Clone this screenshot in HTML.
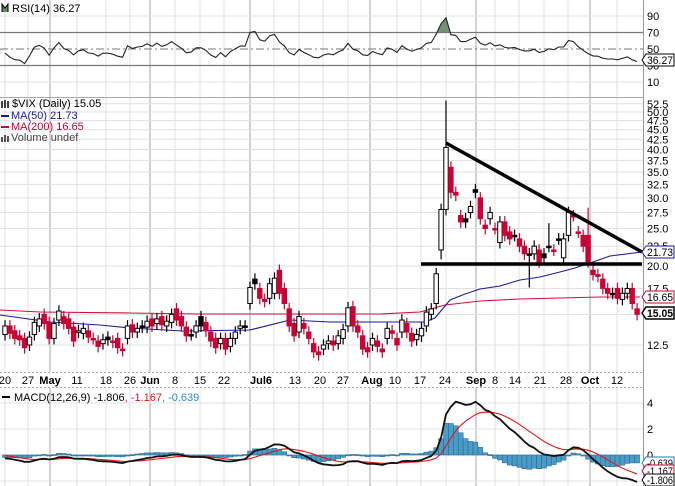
<!DOCTYPE html>
<html><head><meta charset="utf-8"><style>
html,body{margin:0;padding:0;background:#fff;overflow:hidden}
svg{display:block;font-family:"Liberation Sans",sans-serif;font-size:11px}
</style></head><body>
<svg id="c" width="675" height="486" xmlns="http://www.w3.org/2000/svg"></svg>
<script>
var S=document.getElementById('c'),out=[];
function a(s){out.push(s);}
var D=[[13.3,14.0],[14.0,13.4],[13.6,13.0],[13.2,12.9],[13.0,12.3],
[12.5,13.1],[13.3,14.3],[14.0,14.6],[15.0,14.2],[14.3,13.0],
[13.0,14.2],[14.5,15.3],[14.8,14.2],[14.6,13.8],[13.9,12.8],
[13.5,13.6],[13.4,13.8],[13.6,13.1],[13.0,13.0],[12.8,12.4],
[12.6,12.9],[13.1,12.9],[12.8,12.7],[13.0,12.3],[12.2,12.1],
[13.0,14.0],[14.1,13.5],[13.5,13.8],[14.0,13.9],[13.9,14.4],
[14.6,14.0],[14.2,14.6],[14.8,14.1],[14.0,14.4],[14.3,15.0],
[15.5,14.5],[14.8,14.0],[13.9,13.2],[13.3,13.3],[13.5,14.0],
[14.8,14.0],[14.3,13.6],[13.5,12.8],[13.0,12.3],[12.6,13.0],
[13.0,12.2],[12.4,13.0],[13.0,13.5],[13.8,14.0],[14.0,14.0],
[16.0,17.6],[18.5,18.0],[17.5,16.5],[16.4,16.2],[16.5,18.0],
[17.0,18.6],[19.5,17.0],[17.5,16.0],[15.5,14.0],[14.2,13.2],
[13.5,14.8],[14.2,13.8],[13.5,13.0],[12.6,12.0],[12.0,11.8],
[12.2,12.5],[12.6,12.8],[12.8,12.5],[12.6,13.2],[13.0,13.7],
[14.0,15.6],[15.7,14.0],[14.0,13.5],[13.2,12.2],[12.3,12.0],
[12.5,13.0],[12.8,12.4],[12.2,12.0],[13.0,13.8],[13.6,13.4],
[13.0,12.5],[13.5,14.5],[14.2,13.5],[13.4,12.8],[12.9,13.3],
[13.2,13.8],[14.0,15.2],[15.0,15.5],[16.0,19.1],[22.0,28.0],
[28.0,40.5],[36.0,31.0],[31.0,30.5],[27.0,26.0],[26.5,26.0],
[27.5,28.5],[31.5,31.0],[30.0,26.5],[25.5,25.0],[26.5,27.5],
[25.0,25.0],[23.0,26.0],[26.0,24.0],[24.5,23.5],[24.0,24.0],
[23.5,22.5],[22.5,21.5],[21.5,21.5],[21.5,22.5],[22.0,20.5],
[21.5,21.0],[22.5,22.5],[22.0,22.0],[23.5,23.5],[21.0,23.5],
[24.0,27.5],[27.0,27.0],[24.5,24.5],[24.0,22.5],[24.0,20.5],
[19.5,19.0],[19.0,18.8],[18.5,17.5],[17.5,17.0],[17.0,17.0],
[17.5,16.5],[16.4,17.0],[17.0,17.5],[17.5,16.0],[15.5,15.0]];
function X(i){return 5+i*4.9;}
function Y(p){return 266-(Math.log10(p)-Math.log10(20))*387;}
function RY(r){return 49-(r-50)*0.825;}
function MY(v){return 455-v*13;}
var W=643;
var wk=[5,28,50,77,106,130,150,175,200,224,250,274,299,323,348,370,397,421,446,476,495,519,544,568,590,617];
var mon={50:1,150:1,250:1,370:1,476:1,590:1};
function vgrid(y1,y2){wk.forEach(function(x){a('<line x1="'+x+'" y1="'+y1+'" x2="'+x+'" y2="'+y2+'" stroke="'+(mon[x]?'#c4c4c4':'#e0e0e0')+'" stroke-width="'+(mon[x]?1.5:1)+'"/>');});}
vgrid(0,97);
[10,90].forEach(function(r){a('<line x1="0" x2="'+W+'" y1="'+RY(r)+'" y2="'+RY(r)+'" stroke="#e0e0e0"/>');});
var pl=[52.5,50,47.5,45,42.5,40,37.5,35,32.5,30,27.5,25,22.5,20,17.5,15,12.5,10];
vgrid(98,372);
pl.forEach(function(p){a('<line x1="0" x2="'+W+'" y1="'+Y(p)+'" y2="'+Y(p)+'" stroke="#e0e0e0"/>');});
vgrid(388,486);
[4,2,0,-2].forEach(function(v){a('<line x1="0" x2="'+W+'" y1="'+MY(v)+'" y2="'+MY(v)+'" stroke="#e0e0e0"/>');});
var C=D.map(function(d){return d[1];});
var ag=0.18,al=0.22,rsi=[];
for(var i=0;i<C.length;i++){var ch=i?C[i]-C[i-1]:0;ag=(ag*13+Math.max(ch,0))/14;al=(al*13+Math.max(-ch,0))/14;rsi.push(100-100/(1+ag/al));}
var rp=rsi.map(function(r,i){return X(i).toFixed(1)+','+RY(r).toFixed(1);}).join(' ');
a('<defs><clipPath id="ab"><rect x="0" y="0" width="'+W+'" height="'+RY(70)+'"/></clipPath></defs>');
a('<polygon clip-path="url(#ab)" points="'+X(0)+','+RY(70)+' '+rp+' '+X(129)+','+RY(70)+'" fill="#6f9470"/>');
a('<line x1="0" x2="'+W+'" y1="'+RY(70)+'" y2="'+RY(70)+'" stroke="#777" stroke-width="1.2"/>');
a('<line x1="0" x2="'+W+'" y1="'+RY(30)+'" y2="'+RY(30)+'" stroke="#777" stroke-width="1.2"/>');
a('<line x1="0" x2="'+W+'" y1="'+RY(50)+'" y2="'+RY(50)+'" stroke="#777" stroke-dasharray="8,3,2,3"/>');
a('<polyline points="'+rp+'" fill="none" stroke="#222" stroke-width="1.1"/>');
a('<polyline points="0,310 40,312 130,313 200,314 300,314 380,314 420,312 445,305 480,301 520,299 560,298 600,297 640,297" fill="none" stroke="#d0103a" stroke-width="1.1"/>');
a('<polyline points="0,315 50,322 100,325 130,328 183,331 250,330 290,320 330,322 380,322 425,322 435,318 450,300 465,294 480,289 500,286 520,280 540,277 560,272 575,268 590,263 610,256 642,252" fill="none" stroke="#1a1a9a" stroke-width="1.1"/>');
for(var i=0;i<D.length;i++){var o=D[i][0],c=D[i][1],pc=i?D[i-1][1]:o;
var h=Math.max(o,c)*1.035,l=Math.min(o,c)*0.965;
if(i==90){h=53.5;}if(i==89){l=20.8;}if(i==119){h=28.3}if(i==111){h=25.8}if(i==107){l=17.6}
var col=c<pc?'#cc0033':'#000',x=X(i);
a('<line x1="'+x+'" x2="'+x+'" y1="'+Y(h)+'" y2="'+Y(l)+'" stroke="'+col+'" stroke-width="1.2"/>');
var yt=Y(Math.max(o,c)),yb=Y(Math.min(o,c));if(yb-yt<1.5){yb=yt+1.5;}
var fill=c>o?'#fff':col;
a('<rect x="'+(x-2.2)+'" y="'+yt+'" width="4.4" height="'+(yb-yt)+'" fill="'+fill+'" stroke="'+col+'" stroke-width="1"/>');}
a('<line x1="446" y1="143" x2="642" y2="252" stroke="#000" stroke-width="3.5"/>');
a('<line x1="421" y1="264" x2="642" y2="264" stroke="#000" stroke-width="3.5"/>');
var e12=C[0],e26=C[0],sg=0,m=[],s=[];
for(var i=0;i<C.length;i++){e12+=(C[i]-e12)*2/13;e26+=(C[i]-e26)*2/27;var mv=e12-e26-0.25;sg+=(mv-sg)*0.2;m.push(mv);s.push(sg);}
for(var i=0;i<C.length;i++){var hv=m[i]-s[i],y0=MY(0),y1=MY(hv);
a('<rect x="'+(X(i)-2.45)+'" y="'+Math.min(y0,y1)+'" width="4.9" height="'+Math.max(Math.abs(y1-y0),1)+'" fill="#4a9cc8" stroke="#2a6a90" stroke-width="0.6"/>');}
a('<polyline points="'+s.map(function(v,i){return X(i).toFixed(1)+','+MY(v).toFixed(1)}).join(' ')+'" fill="none" stroke="#ee1111" stroke-width="1.1"/>');
a('<polyline points="'+m.map(function(v,i){return X(i).toFixed(1)+','+MY(v).toFixed(1)}).join(' ')+'" fill="none" stroke="#111" stroke-width="1.8"/>');
a('<rect x="0" y="372" width="'+W+'" height="15" fill="#fff"/>');
a('<line x1="0" x2="'+W+'" y1="372.5" y2="372.5" stroke="#aaa" stroke-dasharray="2,2"/><line x1="0" x2="'+W+'" y1="387.5" y2="387.5" stroke="#aaa" stroke-dasharray="2,2"/>');
[[5,'20'],[28,'27'],[50,'May',1],[77,'11'],[106,'18'],[130,'26'],[150,'Jun',1],[175,'8'],[200,'15'],[224,'22'],[261,'Jul6',1],[295,'13'],[320,'20'],[343,'27'],[372,'Aug',1],[395,'10'],[420,'17'],[445,'24'],[476,'Sep',1],[495,'8'],[515,'14'],[540,'21'],[566,'28'],[590,'Oct',1],[617,'12']].forEach(function(t){
a('<text x="'+t[0]+'" y="384" text-anchor="middle" font-size="11"'+(t[2]?' font-weight="bold" font-size="12"':'')+'>'+t[1]+'</text>');});
a('<line x1="0" x2="'+W+'" y1="97.5" y2="97.5" stroke="#aaa"/>');
a('<line x1="'+W+'.5" x2="'+W+'.5" y1="0" y2="486" stroke="#999"/>');
a('<rect x="'+(W+1)+'" y="0" width="32" height="486" fill="#fff"/>');
[90,70,50,30,10].forEach(function(r){a('<text x="647" y="'+(RY(r)+4)+'">'+r+'</text>');});
pl.forEach(function(p){if(p==15||p==10)return;a('<text x="647" y="'+(Y(p)+4)+'">'+p.toFixed(1)+'</text>');});
[[4,'4'],[2,'2'],[0,'0']].forEach(function(v){a('<text x="647" y="'+(MY(v[0])+4)+'">'+v[1]+'</text>');});
function box(y,t,col,b){a('<path d="M642,'+y+' l4,-6 h28 v12 h-28 z" fill="#fff" stroke="'+col+'" stroke-width="'+(b?1.5:1)+'"/><text x="647" y="'+(y+4)+'" textLength="26" lengthAdjust="spacingAndGlyphs"'+(b?' font-weight="bold"':'')+'>'+t+'</text>');}
box(60,'36.27','#000');box(252,'21.73','#1a1a9a');box(297,'16.65','#cc0033');box(313,'15.05','#000',1);
box(463,'-0.639','#2a7ab0');box(471,'-1.167','#cc0033');box(480,'-1.806','#000');
a('<path d="M2,12 v-8 l3,4 l3,-4 v8" fill="#5a8a5a" stroke="#000" stroke-width="1"/>');
a('<text x="12" y="12">RSI(14) 36.27</text>');
a('<path d="M2,108 v-7 M5,108 v-8 M8,108 v-7" stroke="#000" stroke-width="1.5"/><text x="12" y="107">$VIX (Daily) 15.05</text>');
a('<line x1="1" x2="9" y1="116" y2="116" stroke="#1a1a9a" stroke-width="2"/><text x="11" y="119" fill="#1a1a9a">MA(50) 21.73</text>');
a('<line x1="1" x2="9" y1="127" y2="127" stroke="#cc0033" stroke-width="2"/><text x="11" y="130" fill="#cc0033">MA(200) 16.65</text>');
a('<path d="M2,142 v-5 M5,142 v-7 M8,142 v-6" stroke="#555" stroke-width="2"/><text x="11" y="141" fill="#444">Volume undef</text>');
a('<line x1="2" x2="10" y1="397" y2="397" stroke="#000" stroke-width="2"/><text x="14" y="401">MACD(12,26,9) -1.806<tspan fill="#ee1111">, -1.167</tspan><tspan fill="#2a8ac8">, -0.639</tspan></text>');
S.innerHTML=out.join('');
</script>
</body></html>
